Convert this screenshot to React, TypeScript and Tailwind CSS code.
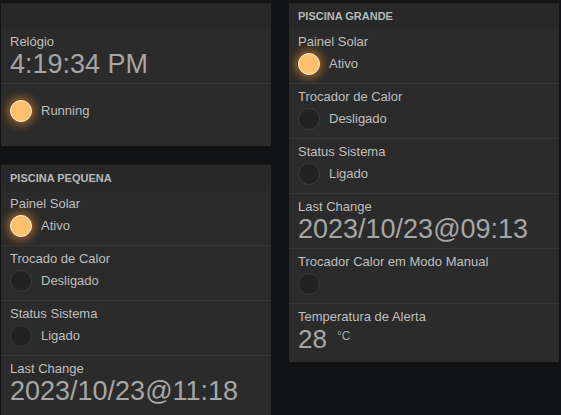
import React from "react";

type Row =
  | { kind: "led"; label?: string; text?: string; on: boolean }
  | { kind: "text"; label: string; value: string; last?: boolean }
  | { kind: "temp"; label: string; value: string; unit: string };

function Led({ on }: { on: boolean }) {
  return on ? (
    <div className="w-[22px] h-[22px] shrink-0 rounded-full bg-[#ffc06e] border border-[#fff1d8] shadow-[0_0_8px_3px_rgba(255,150,40,0.5)]" />
  ) : (
    <div className="w-[22px] h-[22px] shrink-0 rounded-full bg-[#222222] border border-[#3a3a3a]" />
  );
}

function Label({ children }: { children: React.ReactNode }) {
  return <div className="h-[18px] leading-[18px] text-[13px] text-[#bfbfbf]">{children}</div>;
}

function RowView({ row }: { row: Row }) {
  if (row.kind === "led") {
    return (
      <div className="px-[9px] pt-[4px] pb-[8px]">
        <Label>{row.label}</Label>
        <div className="mt-[2px] flex items-center gap-[9px]">
          <Led on={row.on} />
          {row.text && <span className="text-[13px] text-[#bfbfbf]">{row.text}</span>}
        </div>
      </div>
    );
  }
  if (row.kind === "text") {
    return (
      <div className={row.last ? "px-[9px] pt-[4px] pb-[14px]" : "px-[9px] pt-[4px] pb-[5px]"}>
        <Label>{row.label}</Label>
        <div className="text-[27px] leading-[27px] text-[#a6a6a6]">{row.value}</div>
      </div>
    );
  }
  return (
    <div className="px-[9px] pt-[4px] pb-[10px]">
      <Label>{row.label}</Label>
      <div className="flex items-start">
        <span className="text-[26px] leading-[26px] text-[#a6a6a6]">{row.value}</span>
        <span className="ml-[10px] mt-[3px] text-[12px] leading-[14px] text-[#a6a6a6]">{row.unit}</span>
      </div>
    </div>
  );
}

function Card({ title, children }: { title?: string; children: React.ReactNode }) {
  return (
    <div className="w-[270px] bg-[#2b2b2b]">
      <div className="h-[26px] px-[9px] flex items-center bg-[#282828] text-[11px] font-bold uppercase text-[#b8b8b8]">
        {title}
      </div>
      <div className="divide-y divide-[#363636]">{children}</div>
    </div>
  );
}

const pequena: Row[] = [
  { kind: "led", label: "Painel Solar", text: "Ativo", on: true },
  { kind: "led", label: "Trocado de Calor", text: "Desligado", on: false },
  { kind: "led", label: "Status Sistema", text: "Ligado", on: false },
  { kind: "text", label: "Last Change", value: "2023/10/23@11:18", last: true },
];

const grande: Row[] = [
  { kind: "led", label: "Painel Solar", text: "Ativo", on: true },
  { kind: "led", label: "Trocador de Calor", text: "Desligado", on: false },
  { kind: "led", label: "Status Sistema", text: "Ligado", on: false },
  { kind: "text", label: "Last Change", value: "2023/10/23@09:13" },
  { kind: "led", label: "Trocador Calor em Modo Manual", on: false },
  { kind: "temp", label: "Temperatura de Alerta", value: "28", unit: "°C" },
];

export default function App() {
  return (
    <div className="w-[561px] h-[415px] overflow-hidden bg-[#121315] font-['Liberation_Sans',Arial,sans-serif]">
      <div className="flex items-start gap-[18px] pt-[3px] pl-px">
        <div className="flex flex-col gap-[19px]">
          <Card>
            <div className="px-[9px] pt-[4px] pb-[5px]">
              <Label>Relógio</Label>
              <div className="text-[27px] leading-[27px] text-[#a6a6a6]">4:19:34 PM</div>
            </div>
            <div className="px-[9px] pt-[16px] pb-[24px] flex items-center gap-[9px]">
              <Led on={true} />
              <span className="text-[13px] text-[#bfbfbf]">Running</span>
            </div>
          </Card>
          <Card title="Piscina Pequena">
            {pequena.map((r, i) => (
              <RowView key={i} row={r} />
            ))}
          </Card>
        </div>
        <Card title="Piscina Grande">
          {grande.map((r, i) => (
            <RowView key={i} row={r} />
          ))}
        </Card>
      </div>
    </div>
  );
}
